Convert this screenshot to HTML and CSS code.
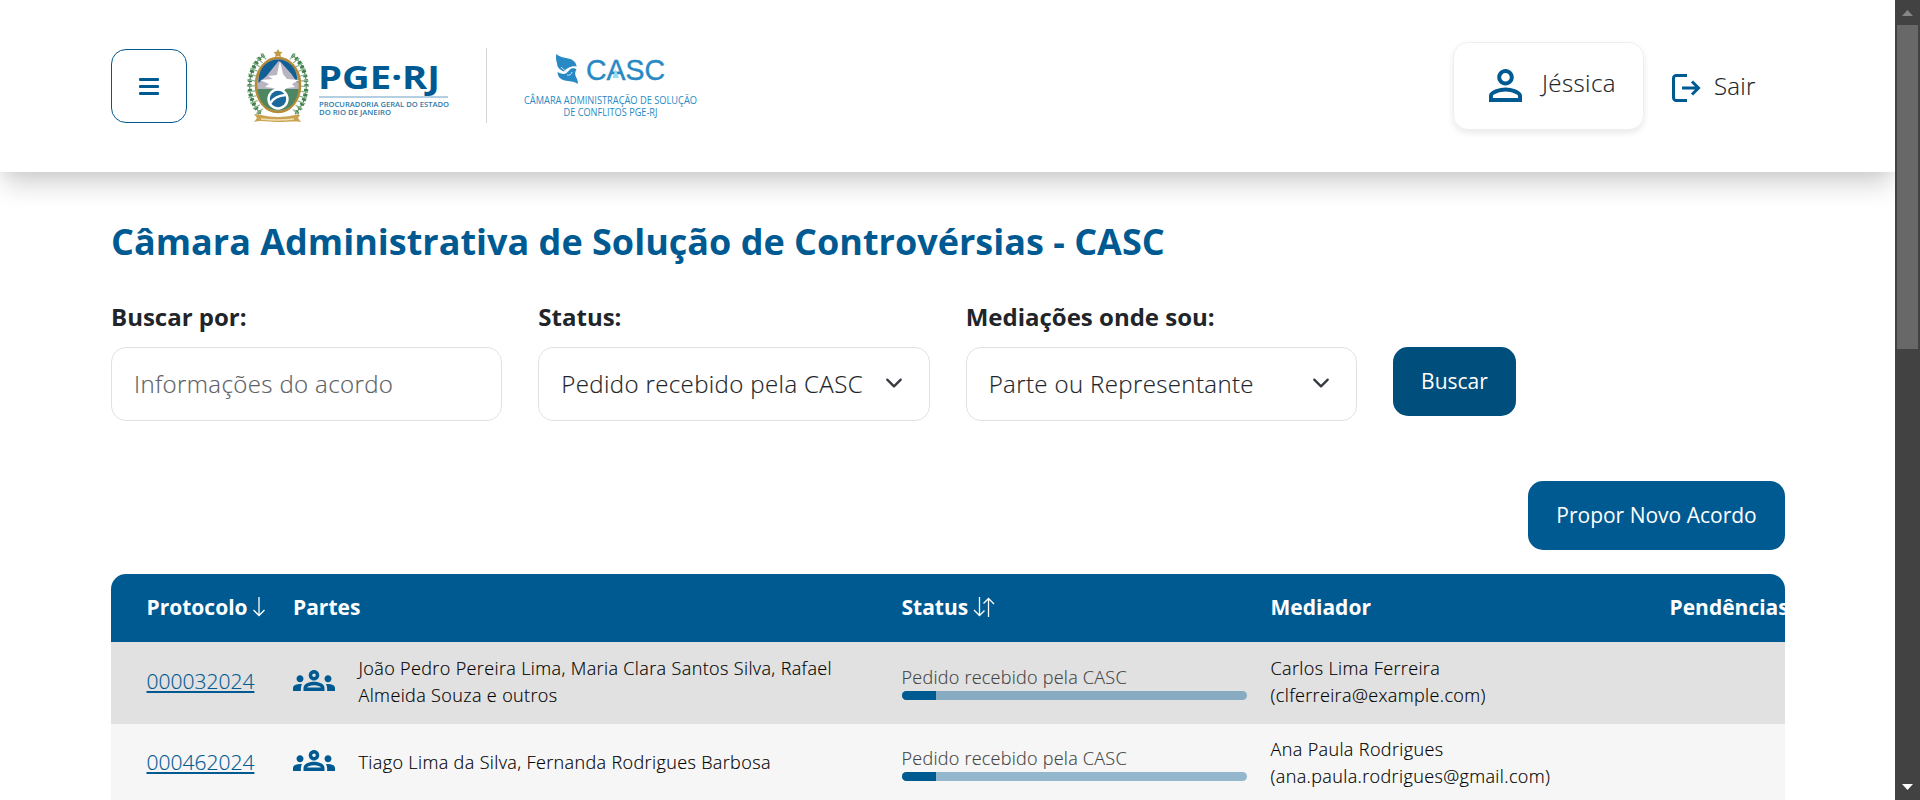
FILE: index.html
```html
<!DOCTYPE html>
<html lang="pt-BR">
<head>
<meta charset="utf-8">
<title>CASC - PGE-RJ</title>
<link rel="stylesheet" href="styles.css">
</head>
<body>
<svg width="0" height="0" class="defs">
  <symbol id="groups" viewBox="0 0 24 14">
    <path d="M4 7c1.1 0 2-.9 2-2s-.9-2-2-2-2 .9-2 2 .9 2 2 2zm1.13 1.1C4.76 8.04 4.39 8 4 8c-.99 0-1.93.21-2.78.58C.48 8.9 0 9.62 0 10.43V12h4.500v-1.610c0-.83.23-1.610.63-2.290zM20 7c1.100 0 2-.9 2-2s-.9-2-2-2-2 .9-2 2 .9 2 2 2zm4 3.430c0-.81-.48-1.530-1.220-1.850C21.930 8.210 20.990 8 20 8c-.39 0-.76.04-1.130.100.4.680.63 1.460.63 2.290V12H24v-1.570zM16.240 7.650C15.070 7.130 13.630 6.750 12 6.750s-3.070.39-4.240.900C6.680 8.130 6 9.210 6 10.390V12h12v-1.610c0-1.180-.68-2.260-1.760-2.740zM8.070 10c.09-.23.130-.39.910-.690.970-.38 1.990-.56 3.020-.56s2.050.18 3.020.56c.77.300.81.460.910.690H8.070zM12 2c.55 0 1 .45 1 1s-.45 1-1 1-1-.45-1-1 .45-1 1-1m0-2C10.340 0 9 1.340 9 3s1.340 3 3 3 3-1.340 3-3-1.340-3-3-3z"/>
  </symbol>
</svg>
<div class="window">
  <div class="page">
    <header class="header">
      <button class="menu" aria-label="Menu"><span></span><span></span><span></span></button>
      <div class="brand">
        <svg class="crest" viewBox="0 0 63 74">
          <g fill="none" stroke="#5f9365" stroke-width="1.200">
            <path d="M18 6C1 18-2 48 15 65M46 6c17 12 20 42 3 59"/>
          </g>
          <g fill="none" stroke="#3f7f4c" stroke-width="4.200" stroke-dasharray="2.600 2.200">
            <path d="M18 6C1 18-2 48 15 65M46 6c17 12 20 42 3 59"/>
          </g>
          <g fill="none" stroke="#8db491" stroke-width="8" stroke-dasharray="1.300 4.200">
            <path d="M18 7C2 20 0 48 15 64M46 7c15 13 17 41 3 57"/>
          </g>
          <ellipse cx="32" cy="36" rx="22" ry="27" fill="#b8b4c2" stroke="#b58b35" stroke-width="2.600"/>
          <path d="M12.500 34C12 18 22 10.500 32 10.500S52 18 51.500 34l-6-9-10-11-3-2-12 15z" fill="#125f96"/>
          <path d="M11.500 40h41c-1 13-9 21.500-20.500 21.500S12.500 53 11.500 40z" fill="#4d8663"/>
          <path d="M34 12q-2 8-3 14l-9 1 5 3-13 1 9 4-4 3 8 1 9 4 5-4 8-1-3-3 7-4-12-1-4-5z" fill="#fff"/>
          <circle cx="32" cy="50" r="10.700" fill="#fff"/><circle cx="32" cy="50" r="8.200" fill="#1b689b"/>
          <path d="M24.500 54q4-7 15-8" fill="none" stroke="#fff" stroke-width="2.600"/>
          <path d="M32 0l1.500 2.700 3 .3-2 2.200.4 3.100L32 7l-2.900 1.300.4-3.100-2-2.200 3-.3z" fill="#c29a45"/>
          <path d="M8 65c8 0 10 3 24 3s16-3 22-2l-2 3 3 4c-8-1-12 0-23 0s-16-2-24 0l3-4z" fill="#c9a352"/>
          <path d="M15 70q17 2 33 0" fill="none" stroke="#f1dfad" stroke-width="1.300"/>
        </svg>
        <svg class="pge" viewBox="0 0 132 74">
          <text class="pge-name" x="0" y="40.500" textLength="122" lengthAdjust="spacingAndGlyphs">PGE·RJ</text>
          <path d="M1 49h129" stroke="#6b9fc2" stroke-width="1"/>
          <text class="pge-sub" x="1" y="59" textLength="130" lengthAdjust="spacingAndGlyphs">PROCURADORIA GERAL DO ESTADO</text>
          <text class="pge-sub" x="1" y="67" textLength="72" lengthAdjust="spacingAndGlyphs">DO RIO DE JANEIRO</text>
        </svg>
      </div>
      <svg class="casc" viewBox="0 0 180 74">
        <path d="M36.300 6c3 3 7 3.500 12 4.500 5 1 8 4 8.300 8-3-.5-6 0-8.500 1.500-2 1-3 2-4 3.500-4-1.500-7-4-7-8-1-3-1.500-6-.8-9.500z" fill="#2889c4"/>
        <path d="M57.800 36c-4-3-9-2.500-13-3.500s-7-3-7.300-8.500c3 1.500 6 3 9 1 2-1.500 3-4 5-4.500 2-.5 4 0 5 1-2 3-1.500 5-.5 7.500 1.500 2.500 2 4.500 1.800 7z" fill="#2889c4"/>
        <path d="M41 19q2 3 6 4.500M47 27q4 1 5-3" fill="none" stroke="#d4e9f5" stroke-width="1"/>
        <text class="casc-name" x="66" y="32" textLength="79" lengthAdjust="spacingAndGlyphs">CASC</text>
        <path d="M92.500 30l3.200-9 3.200 9z" fill="#8fdff2"/>
        <text class="casc-sub" x="4" y="55.500" textLength="173" lengthAdjust="spacingAndGlyphs">CÂMARA ADMINISTRAÇÃO DE SOLUÇÃO</text>
        <text class="casc-sub" x="43.500" y="67.500" textLength="94" lengthAdjust="spacingAndGlyphs">DE CONFLITOS PGE-RJ</text>
      </svg>
      <div class="account">
        <svg class="user-icon" viewBox="4 4 16 16"><path d="M12 5.900c1.160 0 2.100.94 2.100 2.100s-.94 2.100-2.100 2.100S9.900 9.160 9.900 8s.94-2.100 2.100-2.100m0 9c2.970 0 6.100 1.460 6.100 2.100v1.100H5.900V17c0-.64 3.130-2.100 6.100-2.100M12 4C9.790 4 8 5.790 8 8s1.790 4 4 4 4-1.790 4-4-1.790-4-4-4zm0 9c-2.670 0-8 1.340-8 4v3h16v-3c0-2.660-5.330-4-8-4z"/></svg>
        <span>Jéssica</span>
      </div>
      <a class="logout">
        <svg viewBox="0 0 29 28"><path d="M15 1.500H4.200A2.700 2.700 0 0 0 1.500 4.200v19.600a2.700 2.700 0 0 0 2.700 2.700H15M10 14h17M20 7.500l6.500 6.500-6.500 6.500" fill="none" stroke="#005a92" stroke-width="3"/></svg>
        <span>Sair</span>
      </a>
    </header>
    <main class="main">
      <h1 class="title">Câmara Administrativa de Solução de Controvérsias - CASC</h1>
      <form class="filters">
        <label class="field"><span class="label">Buscar por:</span><span class="control placeholder">Informações do acordo</span></label>
        <label class="field"><span class="label">Status:</span><span class="control">Pedido recebido pela CASC<svg class="chevron" viewBox="0 0 16 16"><path d="m2 5 6 6 6-6"/></svg></span></label>
        <label class="field"><span class="label">Mediações onde sou:</span><span class="control">Parte ou Representante<svg class="chevron" viewBox="0 0 16 16"><path d="m2 5 6 6 6-6"/></svg></span></label>
        <button type="button" class="btn btn-dark">Buscar</button>
      </form>
      <div class="actions"><button class="btn btn-new">Propor Novo Acordo</button></div>
      <div class="table-wrap">
        <table class="table">
          <colgroup><col class="c-prot"><col class="c-part"><col class="c-stat"><col class="c-med"><col class="c-pend"></colgroup>
          <thead>
            <tr>
              <th class="first">Protocolo<svg class="sort one" viewBox="0 0 12 20"><path d="M6 0v18.500M.5 13l5.500 5.500 5.500-5.500"/></svg></th>
              <th>Partes</th>
              <th>Status<svg class="sort two" viewBox="0 0 22 20"><path d="M6.500 0v18.500M1 13l5.500 5.500 5-5M15.500 20V1.500M10.500 6.500l5-5 5.500 5.500"/></svg></th>
              <th>Mediador</th>
              <th>Pendências</th>
            </tr>
          </thead>
          <tbody>
            <tr>
              <td class="first"><a class="link">000032024</a></td>
              <td><div class="parties"><svg class="groups"><use href="#groups"/></svg><span>João Pedro Pereira Lima, Maria Clara Santos Silva, Rafael Almeida Souza e outros</span></div></td>
              <td><div class="status"><span>Pedido recebido pela CASC</span><div class="progress"><div style="width:10%"></div></div></div></td>
              <td>Carlos Lima Ferreira<br>(clferreira@example.com)</td>
              <td></td>
            </tr>
            <tr>
              <td class="first"><a class="link">000462024</a></td>
              <td><div class="parties"><svg class="groups"><use href="#groups"/></svg><span>Tiago Lima da Silva, Fernanda Rodrigues Barbosa</span></div></td>
              <td><div class="status"><span>Pedido recebido pela CASC</span><div class="progress"><div style="width:10%"></div></div></div></td>
              <td>Ana Paula Rodrigues<br>(ana.paula.rodrigues@gmail.com)</td>
              <td></td>
            </tr>
          </tbody>
        </table>
      </div>
    </main>
  </div>
  <div class="scrollbar">
    <svg class="arrow" viewBox="0 0 11 6"><path d="M0 6 5.500 0 11 6z" fill="#868686"/></svg>
    <div class="thumb"></div>
    <svg class="arrow down" viewBox="0 0 11 6"><path d="M0 0h11L5.500 6z" fill="#fff"/></svg>
  </div>
</div>
</body>
</html>
```
FILE: styles.css
```css
* { box-sizing: border-box; }
body { margin: 0; overflow: hidden; background: #fff; color: #212529; font-family: "Open Sans", sans-serif; font-weight: 300; }
button { font-family: inherit; }
.defs { display: block; }
.window { display: flex; width: 1920px; height: 800px; overflow: hidden; }
.page { width: 1895px; height: 800px; overflow: hidden; flex: none; }
.header { display: flex; align-items: center; height: 172px; padding: 0 110px 0 111px; background: #fff; box-shadow: 0 16px 24px -4px rgba(0, 0, 0, .18), 0 2px 12px rgba(0, 0, 0, .04); }
.menu { width: 76px; height: 74px; border: 1px solid #005a92; border-radius: 15px; background: #fff; display: flex; flex-direction: column; align-items: center; justify-content: center; gap: 4px; padding: 0 1px 0 0; }
.menu span { width: 20px; height: 3px; border-radius: 1px; background: #005a92; }
.brand { display: flex; height: 75px; margin: 0 0 1px 59px; width: 241px; border-right: 1px solid #d4d4d4; }
.crest { width: 63px; height: 74px; margin-top: 1px; }
.pge { width: 132px; height: 74px; margin-left: 9px; overflow: visible; }
.pge-name { font: 700 32px "Open Sans", sans-serif; fill: #005a92; }
.pge-sub { font: 600 7.5px "Open Sans", sans-serif; fill: #2f79aa; }
.casc { width: 180px; height: 74px; margin: 0 0 2px 33px; overflow: visible; }
.casc-name { font: 400 30px "Liberation Sans", sans-serif; fill: #2889c4; stroke: #2889c4; stroke-width: .4; }
.casc-sub { font: 400 10px "Open Sans", sans-serif; fill: #2889c4; }
.account { display: flex; align-items: center; width: 191px; height: 88px; margin: 0 0 1px auto; padding: 0 0 4px 35px; border: 1px solid #efefef; border-radius: 15px; box-shadow: 0 3px 6px rgba(0, 0, 0, .09); font-size: 24px; letter-spacing: .4px; }
.account span { margin-bottom: 3px; }
.user-icon { width: 33px; height: 33px; fill: #005a92; margin: 4px 20px 0 0; }
.logout { display: flex; align-items: center; gap: 13px; width: 113px; margin-left: 28px; font-size: 24px; letter-spacing: .25px; }
.logout span { margin-bottom: 2px; }
.logout svg { width: 29px; height: 28px; margin-top: 4px; }
.main { padding: 0 110px 0 111px; }
.title { margin: 45px 0 0; font-size: 36px; line-height: 50px; font-weight: 700; color: #005a92; white-space: nowrap; }
.filters { display: flex; gap: 36px; margin-top: 32px; }
.field { display: flex; flex-direction: column; width: 391.330px; }
.label { font-size: 24px; line-height: 36px; font-weight: 700; margin-bottom: 12px; }
.control { display: flex; align-items: center; justify-content: space-between; height: 74px; padding: 0 26px 2px 22px; border: 1px solid #dee2e6; border-radius: 15px; font-size: 24px; letter-spacing: .38px; white-space: nowrap; }
.control, .account, .logout, td { -webkit-text-stroke: .15px currentColor; }
.placeholder { color: #5c6166; }
.chevron { width: 18px; height: 18px; fill: none; stroke: #343a40; stroke-width: 2; stroke-linecap: round; stroke-linejoin: round; }
.btn { height: 69px; padding: 0 0 2px; border: 0; border-radius: 15px; background: #005a92; color: #fff; font-size: 21px; font-weight: 400; white-space: nowrap; }
.btn-new { width: 257px; }
.btn-dark { background: #004e7c; margin-top: 48px; width: 123px; }
.actions { display: flex; justify-content: flex-end; margin-top: 60px; }
.table-wrap { margin-top: 24px; border-radius: 15px 15px 0 0; overflow: hidden; }
.table { width: 1840px; table-layout: fixed; border-collapse: separate; border-spacing: 0; }
.c-prot { width: 182px; }
.c-part { width: 608.500px; }
.c-stat { width: 369px; }
.c-med { width: 399px; }
th { height: 68px; padding: 0 0 2px; background: #005a92; color: #fff; text-align: left; font-size: 21px; font-weight: 700; white-space: nowrap; }
th.first, td.first { padding-left: 35.500px; }
td { height: 81px; padding: 0 0 1px; font-size: 18px; line-height: 27px; letter-spacing: .37px; color: #000; background: #f6f6f6; vertical-align: middle; }
tbody tr:first-child td { background: #e1e1e1; }
tbody tr:last-child td { border-top: 1px solid #dee2e6; padding-bottom: 3px; }
.sort { height: 20px; fill: none; stroke: #fff; stroke-width: 1.300; vertical-align: -2px; }
.one { width: 12px; margin-left: 5px; }
.two { width: 22px; margin-left: 5px; }
.link { font-size: 21px; letter-spacing: 0; color: #005a92; text-decoration: underline; text-decoration-thickness: 2px; text-underline-offset: 2px; }
.parties { display: flex; align-items: center; width: 560px; }
.groups { width: 42px; height: 24.500px; fill: #005a92; flex: none; margin-right: 23.500px; }
.status { width: 345px; color: #444; line-height: 27px; letter-spacing: .25px; }
.status span { display: block; }
.progress { height: 9px; border-radius: 5px; background: rgba(0, 90, 146, .4); overflow: hidden; }
.progress div { height: 100%; background: #005a92; }
.scrollbar { display: flex; flex-direction: column; align-items: center; width: 25px; height: 800px; padding: 10px 0; background: #424242; }
.arrow { width: 11px; height: 6px; flex: none; }
.thumb { width: 21px; height: 324px; margin-top: 9px; background: #686868; }
.down { margin-top: auto; }
```
